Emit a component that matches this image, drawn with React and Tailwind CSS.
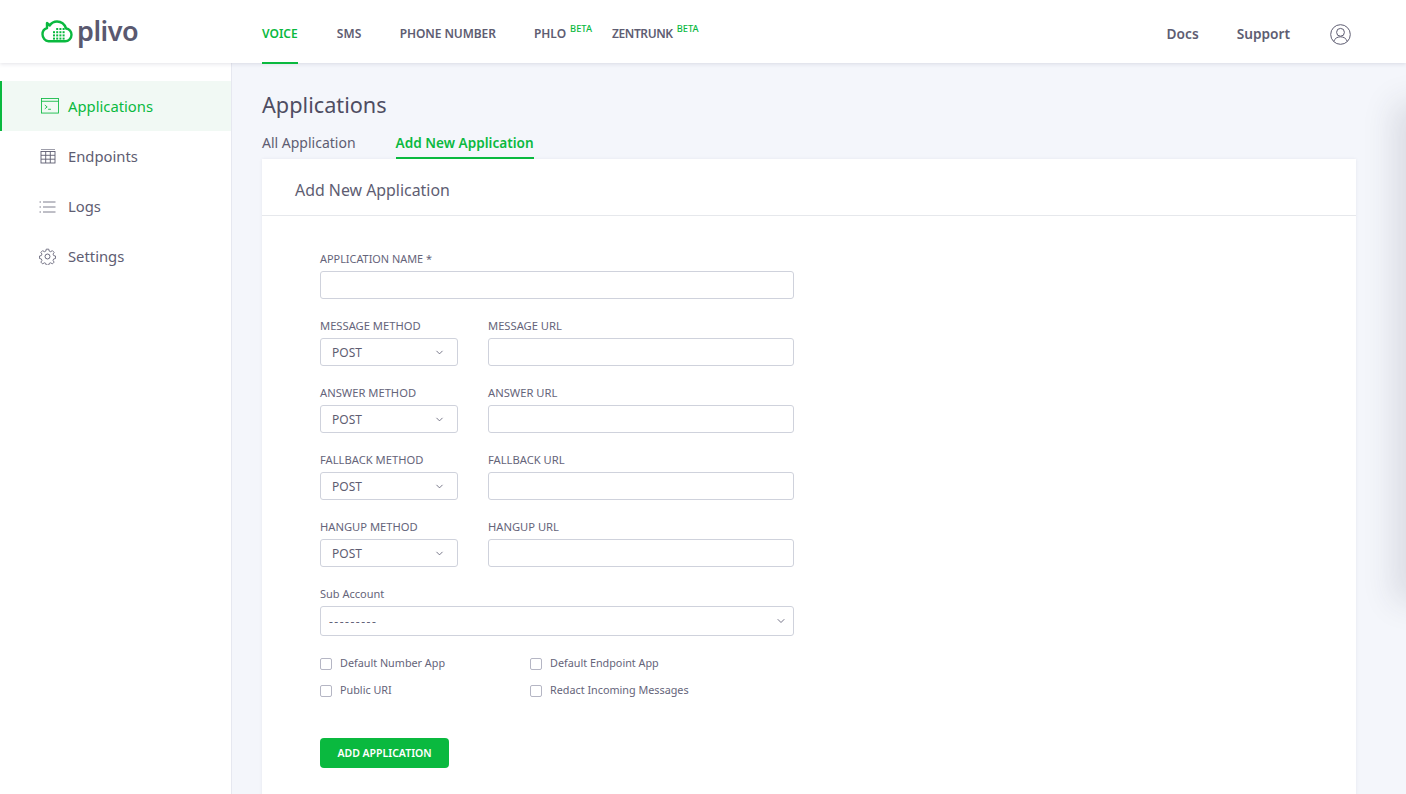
import { ChevronDown } from "lucide-react";

function CloudLogo() {
  return (
    <svg width="32" height="26" viewBox="0 0 32 26" fill="none">
      <path
        d="M6 4v5.200C3.400 10 1.500 12.400 1.500 15.200c0 3.600 2.600 7 6 7h16.600c3.500 0 6.400-2.900 6.400-6.400 0-3.200-2.300-5.800-5.400-6.300C23.700 5.500 20.200 2.500 16 2.500c-3 0-5.700 1.600-7.300 4L6 4z"
        stroke="#0ab93f"
        strokeWidth="2.400"
        strokeLinejoin="round"
      />
      {[10, 13.2, 16.4, 19.6].map((y) =>
        [12, 15.2, 18.4, 21.6].map((x) => (
          <rect key={`${x}-${y}`} x={x} y={y - 1} width="2" height="2" fill={x === 12 && y === 10 ? "#fff" : "#0ab93f"} />
        ))
      )}
    </svg>
  );
}

function TerminalIcon() {
  return (
    <svg width="18" height="16" viewBox="0 0 19 17" fill="none" stroke="#0ab93f" strokeWidth="0.9">
      <rect x="0.5" y="0.5" width="18" height="15.5" />
      <path d="M0.500 3.500h18" />
      <path d="M4 7.500l2.500 2-2.500 2M7.500 12h3" />
    </svg>
  );
}

function TableIcon() {
  return (
    <svg width="16" height="15" viewBox="0 0 16 15" fill="none" stroke="#5e5d72" strokeWidth="0.9">
      <path d="M1 0.500h14" strokeWidth="1" opacity="0.6" />
      <rect x="1" y="2.500" width="14" height="11.5" />
      <path d="M1 6.300h14M1 10.200h14M5.700 2.500v11.500M10.300 2.500v11.500" />
    </svg>
  );
}

function ListIcon() {
  return (
    <svg width="17" height="12" viewBox="0 0 17 12" fill="none" stroke="#5e5d72" strokeWidth="0.8">
      <path d="M0.500 1h1.500M0.500 6h1.500M0.500 11h1.500" />
      <path d="M4 1h12.500M4 6h12.500M4 11h12.500" />
    </svg>
  );
}

function GearIcon() {
  return (
    <svg width="17" height="17" viewBox="0 0 24 24" fill="none" stroke="#5e5d72" strokeWidth="1.300" strokeLinejoin="round">
      <path d="M10 1.500h4l.6 3 2.400 1 2.600-1.700 2.800 2.800-1.700 2.600 1 2.400 2.800.6v4l-2.800.6-1 2.400 1.700 2.600-2.800 2.800-2.600-1.700-2.400 1-.6 2.600h-4l-.6-2.600-2.400-1-2.600 1.700-2.800-2.800 1.700-2.600-1-2.400-2.800-.6v-4l2.800-.6 1-2.400-1.700-2.600 2.800-2.800 2.600 1.700 2.400-1z" transform="translate(12 12) scale(0.9) translate(-12 -13)" />
      <circle cx="12" cy="12" r="3.500" />
    </svg>
  );
}

function UserIcon() {
  return (
    <svg width="21" height="21" viewBox="0 0 21 21" fill="none" stroke="#5e5d72" strokeWidth="1">
      <circle cx="10.500" cy="10.500" r="9.800" />
      <circle cx="10.500" cy="8.300" r="3.900" />
      <path d="M3.700 17.500c1-3 3.500-4.700 6.800-4.700s5.800 1.700 6.800 4.700" />
    </svg>
  );
}

const nav = [
  { label: "VOICE", active: true, cls: "mr-[39px]" },
  { label: "SMS", cls: "mr-[38px] tracking-[0.2px]" },
  { label: "PHONE NUMBER", cls: "mr-[38px] tracking-[-0.08px]" },
  { label: "PHLO", beta: true, cls: "mr-[19px]" },
  { label: "ZENTRUNK", beta: true, cls: "tracking-[-0.4px]" },
];

const side = [
  { label: "Applications", icon: <TerminalIcon />, active: true, iconCls: "ml-[39px] mr-[9px]" },
  { label: "Endpoints", icon: <TableIcon />, iconCls: "ml-[38px] mt-[1px] mr-[12px]" },
  { label: "Logs", icon: <ListIcon />, iconCls: "ml-[37px] mt-[1px] mr-[12px]" },
  { label: "Settings", icon: <GearIcon />, iconCls: "ml-[37px] mr-[12px]" },
];

const methods = [
  ["MESSAGE METHOD", "MESSAGE URL"],
  ["ANSWER METHOD", "ANSWER URL"],
  ["FALLBACK METHOD", "FALLBACK URL"],
  ["HANGUP METHOD", "HANGUP URL"],
];

function Check({ label }) {
  return (
    <label className="flex items-center h-[27px] gap-[8px] text-[10.800px] text-[#65647a]">
      <span className="w-[10px] h-[10px] box-content border border-[#b5b6c4] rounded-[2px] bg-white" />
      {label}
    </label>
  );
}

export default function App() {
  return (
    <div className="h-[794px] overflow-hidden relative flex flex-col bg-[#f4f6fb] font-['Noto_Sans',sans-serif] text-[#5e5d72]">
      <header className="relative z-10 h-[63px] shrink-0 bg-white shadow-[0_1px_4px_rgba(60,60,90,0.14)] flex items-stretch">
        <div className="w-[262px] pl-[41px] flex items-center gap-[4px]">
          <CloudLogo />
          <span className="text-[27px] font-semibold text-[#5a5970] leading-none -mt-[3px] tracking-[-0.5px]">plivo</span>
        </div>
        <nav className="flex items-stretch -mb-[1px] text-[12px] font-semibold">
          {nav.map((n) => (
            <a
              key={n.label}
              className={`relative flex items-center pt-[6px] border-b-2 ${n.cls} ${
                n.active ? "text-[#0ab93f] border-[#0ab93f]" : "border-transparent text-[#5e5d72]"
              }`}
            >
              {n.label}
              {n.beta && <span className="self-start mt-[18px] ml-[4px] mr-[1px] text-[9.300px] font-medium leading-none tracking-normal text-[#0ab93f]">BETA</span>}
            </a>
          ))}
        </nav>
        <div className="ml-auto flex items-center pt-[5px] pr-[55px] text-[13.700px] font-semibold">
          <a className="mr-[38px] -ml-[1px]">Docs</a>
          <a className="mr-[40px]">Support</a>
          <UserIcon />
        </div>
      </header>

      <div className="flex flex-1 min-h-0">
        <aside className="w-[232px] shrink-0 bg-white border-r border-[#e6e8f0] pt-[18px]">
          {side.map((s) => (
            <div
              key={s.label}
              className={`h-[50px] flex items-center text-[14.800px] border-l-2 ${
                s.active ? "bg-[#f1f9f4] border-[#0ab93f] text-[#0ab93f]" : "border-transparent text-[#5e5d72]"
              }`}
            >
              <span className={`flex ${s.iconCls}`}>{s.icon}</span>
              {s.label}
            </div>
          ))}
        </aside>

        <main className="flex-1 min-w-0 pl-[30px] pr-[50px] pt-[27px]">
          <h1 className="text-[21.700px] leading-[30px] text-[#4e4d62]">Applications</h1>
          <div className="flex gap-[40px] mt-[10px] h-[29px] text-[14px]">
            <a className="leading-[21px] pt-[2px]">All Application</a>
            <a className="h-[29px] text-[13.600px] leading-[21px] pt-[2px] font-semibold text-[#0ab93f] border-b-2 border-[#0ab93f]">Add New Application</a>
          </div>
          <section className="bg-white shadow-[0_0_3px_rgba(60,60,90,0.08)] h-[700px]">
            <h2 className="h-[57px] flex items-center pt-[8px] pl-[33px] border-b border-[#e6e8ec] text-[15.900px]">Add New Application</h2>
            <form className="pl-[58px] pt-[36px] w-[532px] text-[#65647a]">
              <label className="block text-[10.900px] leading-[14px] mb-[5px]">APPLICATION NAME *</label>
              <div className="h-[28px] border border-[#cfd2dc] rounded-[3px] bg-white" />
              {methods.map(([m, u]) => (
                <div key={m} className="flex gap-[30px] mt-[20px]">
                  <div className="w-[138px]">
                    <label className="block text-[11.200px] leading-[14px] mb-[5px]">{m}</label>
                    <div className="h-[28px] border border-[#cfd2dc] rounded-[3px] flex items-center justify-between pl-[11px] pr-[12px] text-[12px] text-[#5e5d72]">
                      <span className="pt-[1px]">POST</span>
                      <ChevronDown size={11} strokeWidth={1.8} />
                    </div>
                  </div>
                  <div className="flex-1">
                    <label className="block text-[11.200px] leading-[14px] mb-[5px]">{u}</label>
                    <div className="h-[28px] border border-[#cfd2dc] rounded-[3px]" />
                  </div>
                </div>
              ))}
              <label className="block text-[11px] leading-[14px] mt-[20px] mb-[5px]">Sub Account</label>
              <div className="h-[30px] border border-[#cfd2dc] rounded-[3px] flex items-center justify-between pl-[8px] pr-[6px] text-[12px]">
                <span className="tracking-[1.500px] pt-[1px]">---------</span>
                <ChevronDown size={12} strokeWidth={1.8} />
              </div>
              <div className="grid grid-cols-[210px_1fr] mt-[14px]">
                <Check label="Default Number App" />
                <Check label="Default Endpoint App" />
                <Check label="Public URI" />
                <Check label="Redact Incoming Messages" />
              </div>
              <button type="button" className="mt-[34px] w-[129px] h-[30px] pt-[2px] rounded-[4px] bg-[#0ab93f] text-white text-[10.500px] font-semibold">
                ADD APPLICATION
              </button>
            </form>
          </section>
        </main>
      </div>

      {/* drawer parked off screen, only its shadow shows */}
      <div className="absolute left-full top-[115px] w-[300px] h-[475px] shadow-[0_0_30px_12px_rgba(50,50,70,0.13)]" />
    </div>
  );
}
